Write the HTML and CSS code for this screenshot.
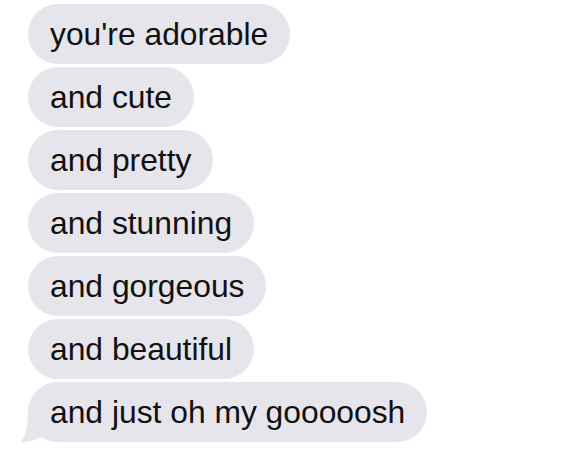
FILE: index.html
```html
<!DOCTYPE html>
<html lang="en">
<head>
    <meta charset="UTF-8">
    <meta name="viewport" content="width=device-width, initial-scale=1.0">
    <title>Messages</title>
    <link rel="stylesheet" href="styles.css">
</head>
<body>
    <div class="thread">
        <div class="bubble">you're adorable</div>
        <div class="bubble">and cute</div>
        <div class="bubble">and pretty</div>
        <div class="bubble">and stunning</div>
        <div class="bubble">and gorgeous</div>
        <div class="bubble">and beautiful</div>
        <div class="bubble last">
            and just oh my gooooosh
            <svg class="tail" width="40" height="42" viewBox="0 0 40 42">
                <path d="M10 6 C10 26 8 35 2 40 C10 40.5 18 38 25 34 L40 30 L40 6 Z" fill="#e6e5eb"/>
            </svg>
        </div>
    </div>
</body>
</html>
```

FILE: styles.css
```css
body {
    margin: 0;
    background: #fff;
    font-family: "Liberation Sans", Arial, sans-serif;
}
.thread {
    display: flex;
    flex-direction: column;
    align-items: flex-start;
    gap: 3px;
    padding: 4px 0 0 28px;
}
.bubble {
    position: relative;
    height: 60px;
    box-sizing: border-box;
    padding: 0 22px;
    display: flex;
    align-items: center;
    background: #e6e5eb;
    border-radius: 30px;
    color: #111;
    font-size: 31.8px;
    white-space: nowrap;
}
.bubble.last {
    z-index: 0;
}
.tail {
    position: absolute;
    left: -10px;
    bottom: -2px;
    z-index: -1;
}
```
